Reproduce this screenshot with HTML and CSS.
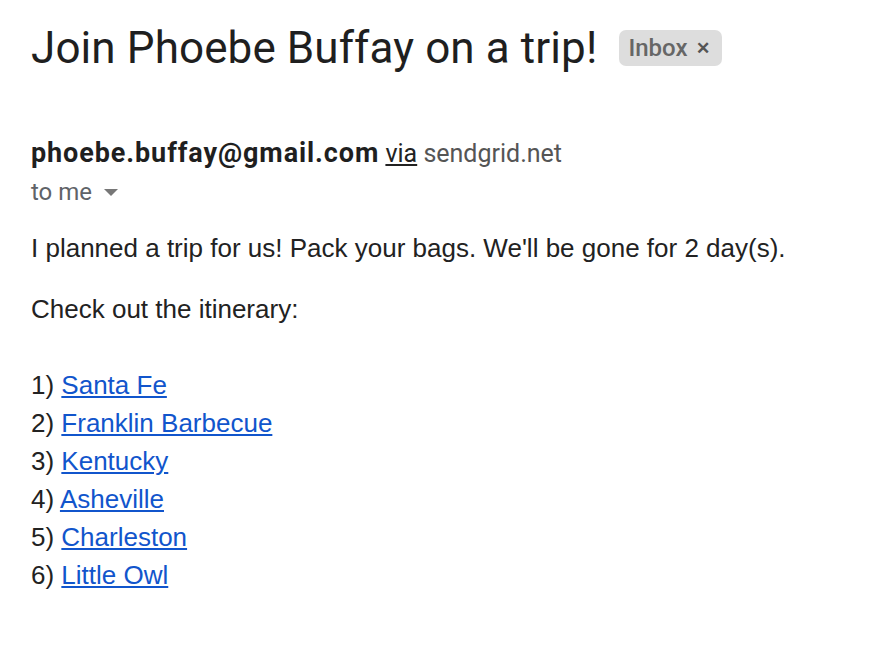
FILE: index.html
```html
<!DOCTYPE html>
<html>
<head>
<meta charset="utf-8">
<link rel="stylesheet" href="styles.css">
</head>
<body>
<div class="mail">
  <div class="subject-row">
    <h1 class="subject">Join Phoebe Buffay on a trip!</h1>
    <span class="chip">Inbox <span class="chip-x">✕</span></span>
  </div>
  <div class="sender">
    <span class="from">phoebe.buffay@gmail.com</span>
    <span class="via">via</span>
    <span class="domain">sendgrid.net</span>
  </div>
  <div class="to">to me <svg class="caret" width="14" height="8" viewBox="0 0 14 8"><path d="M0 0 L14 0 L7 7 Z" fill="#777"/></svg></div>
  <div class="body">
    <p class="para">I planned a trip for us! Pack your bags. We'll be gone for 2 day(s).</p>
    <p class="para">Check out the itinerary:</p>
    <ol class="list">
      <li>1) <a href="#">Santa Fe</a></li>
      <li>2) <a href="#">Franklin Barbecue</a></li>
      <li>3) <a href="#">Kentucky</a></li>
      <li>4) <a href="#">Asheville</a></li>
      <li>5) <a href="#">Charleston</a></li>
      <li>6) <a href="#">Little Owl</a></li>
    </ol>
  </div>
</div>
</body>
</html>
```
FILE: styles.css
```css
html, body { margin: 0; padding: 0; background: #fff; }
.mail { padding: 22px 0 0 31px; }
.subject-row { display: flex; align-items: center; gap: 22px; height: 52px; }
.subject { margin: 0; font-family: Roboto, "Open Sans", sans-serif; font-weight: 400; font-size: 44px; color: #1f1f1f; letter-spacing: 0.1px; }
.chip { background: #dddddd; color: #666; border-radius: 7px; padding: 0 12px 0 9px; font-family: Roboto, sans-serif; font-size: 24px; font-weight: 500; display: inline-flex; align-items: center; gap: 9px; height: 36px; box-sizing: border-box; }
.chip-x { font-size: 17px; font-weight: 700; color: #555; }
.sender { margin-top: 64px; font-family: Roboto, sans-serif; font-size: 25px; line-height: 30px; color: #1f1f1f; }
.from { font-weight: 700; font-size: 27px; letter-spacing: 0.9px; }
.via { text-decoration: underline; color: #222; }
.domain { color: #555; }
.to { margin-top: 8px; font-family: Roboto, sans-serif; font-size: 24px; line-height: 30px; color: #5f6368; display: flex; align-items: center; gap: 12px; }
.caret { margin-top: 2px; }
.body { font-family: "Liberation Sans", Arial, sans-serif; font-size: 26px; color: #222; margin-top: 26px; }
.para { margin: 0 0 31px 0; line-height: 30px; }
.list { list-style: none; padding: 0; margin: 42px 0 0 0; }
.list li { line-height: 38px; }
.list a { color: #1155cc; text-decoration: underline; }
```
